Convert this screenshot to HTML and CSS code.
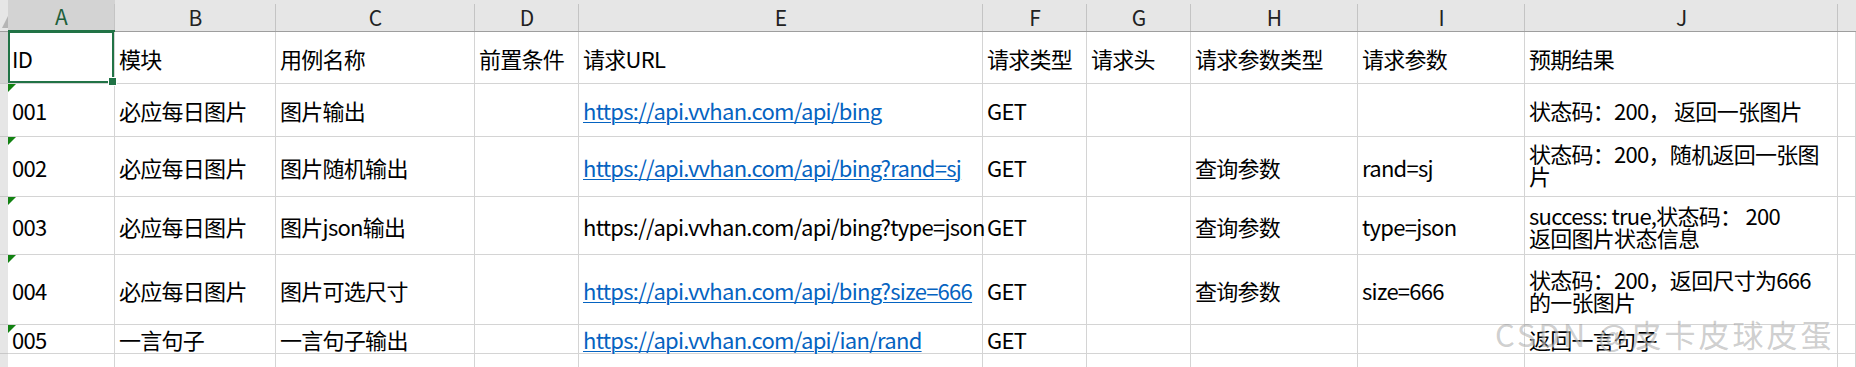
FILE: index.html
```html
<!DOCTYPE html>
<html lang="zh-CN">
<head>
<meta charset="utf-8">
<title>接口测试用例</title>
<link rel="stylesheet" href="styles.css">
</head>
<body>
<div class="sheet">
  <div class="corner"></div>
  <div class="ch sel-col">A</div>
  <div class="ch">B</div>
  <div class="ch">C</div>
  <div class="ch">D</div>
  <div class="ch">E</div>
  <div class="ch">F</div>
  <div class="ch">G</div>
  <div class="ch">H</div>
  <div class="ch">I</div>
  <div class="ch">J</div>
  <div class="ch last"></div>

  <div class="rh sel-row"></div>
  <div class="c sel">ID</div>
  <div class="c">模块</div>
  <div class="c">用例名称</div>
  <div class="c">前置条件</div>
  <div class="c">请求URL</div>
  <div class="c">请求类型</div>
  <div class="c">请求头</div>
  <div class="c">请求参数类型</div>
  <div class="c">请求参数</div>
  <div class="c">预期结果</div>
  <div class="c"></div>

  <div class="rh"></div>
  <div class="c tri">001</div>
  <div class="c">必应每日图片</div>
  <div class="c">图片输出</div>
  <div class="c"></div>
  <div class="c"><a class="link" href="#">https://api.vvhan.com/api/bing</a></div>
  <div class="c">GET</div>
  <div class="c"></div>
  <div class="c"></div>
  <div class="c"></div>
  <div class="c">状态码：200， 返回一张图片</div>
  <div class="c"></div>

  <div class="rh"></div>
  <div class="c tri">002</div>
  <div class="c">必应每日图片</div>
  <div class="c">图片随机输出</div>
  <div class="c"></div>
  <div class="c"><a class="link" href="#">https://api.vvhan.com/api/bing?rand=sj</a></div>
  <div class="c">GET</div>
  <div class="c"></div>
  <div class="c">查询参数</div>
  <div class="c">rand=sj</div>
  <div class="c wrap up">状态码：200，随机返回一张图<br>片</div>
  <div class="c"></div>

  <div class="rh"></div>
  <div class="c tri">003</div>
  <div class="c">必应每日图片</div>
  <div class="c">图片json输出</div>
  <div class="c"></div>
  <div class="c">https://api.vvhan.com/api/bing?type=json</div>
  <div class="c">GET</div>
  <div class="c"></div>
  <div class="c">查询参数</div>
  <div class="c">type=json</div>
  <div class="c wrap">success: true,状态码： 200<br>返回图片状态信息</div>
  <div class="c"></div>

  <div class="rh"></div>
  <div class="c tri">004</div>
  <div class="c">必应每日图片</div>
  <div class="c">图片可选尺寸</div>
  <div class="c"></div>
  <div class="c"><a class="link" href="#">https://api.vvhan.com/api/bing?size=666</a></div>
  <div class="c">GET</div>
  <div class="c"></div>
  <div class="c">查询参数</div>
  <div class="c">size=666</div>
  <div class="c wrap">状态码：200，返回尺寸为666<br>的一张图片</div>
  <div class="c"></div>

  <div class="rh"></div>
  <div class="c tri">005</div>
  <div class="c">一言句子</div>
  <div class="c">一言句子输出</div>
  <div class="c"></div>
  <div class="c"><a class="link" href="#">https://api.vvhan.com/api/ian/rand</a></div>
  <div class="c">GET</div>
  <div class="c"></div>
  <div class="c"></div>
  <div class="c"></div>
  <div class="c">返回一言句子</div>
  <div class="c"></div>

  <div class="rh"></div>
  <div class="c"></div>
  <div class="c"></div>
  <div class="c"></div>
  <div class="c"></div>
  <div class="c"></div>
  <div class="c"></div>
  <div class="c"></div>
  <div class="c"></div>
  <div class="c"></div>
  <div class="c"></div>
  <div class="c"></div>

  <div class="watermark">CSDN @皮卡皮球皮蛋</div>
</div>
</body>
</html>
```

FILE: styles.css
```css
* { box-sizing: border-box; }
html, body {
  margin: 0;
  padding: 0;
  background: #ffffff;
  height: 100%;
  overflow: hidden;
}
.sheet {
  position: relative;
  display: grid;
  grid-template-columns: 8px 107px 161px 199px 104px 404px 104px 104px 167px 167px 313px 1fr;
  grid-template-rows: 32px 52px 53px 60px 58px 70px 29px 40px;
  font-family: "Noto Sans CJK SC", "Noto Sans", sans-serif;
  font-size: 22px;
  letter-spacing: -0.72px;
  color: #000;
}
.corner {
  position: relative;
  background: #e6e6e6;
  border-bottom: 1px solid #9e9e9e;
}
.corner::after {
  content: "";
  position: absolute;
  right: 0;
  bottom: 3px;
  border-left: 6px solid transparent;
  border-bottom: 12px solid #b5b5b5;
}
.ch {
  position: relative;
  background: #e6e6e6;
  border-bottom: 1px solid #9e9e9e;
  display: flex;
  align-items: center;
  justify-content: center;
  padding-top: 3px;
  color: #222;
  font-size: 21px;
  letter-spacing: 0;
  line-height: 1;
}
.ch::after {
  content: "";
  position: absolute;
  right: 0;
  top: 4px;
  bottom: 0;
  width: 1px;
  background: #c4c4c4;
}
.ch.last::after { display: none; }
.ch.sel-col {
  background: #d3d3d3;
  color: #1e5f3b;
  border-bottom: 2px solid #217346;
}
.rh {
  background: #e6e6e6;
  border-bottom: 1px solid #c8c8c8;
}
.rh.sel-row { background: #d3d3d3; }
.c {
  position: relative;
  display: flex;
  align-items: center;
  padding: 0 3px 0 4px;
  border-right: 1px solid #d4d4d4;
  border-bottom: 1px solid #d4d4d4;
  white-space: nowrap;
  overflow: visible;
  line-height: 22px;
}
.c.wrap { line-height: 22px; }
.c.up { padding-bottom: 5px; }
.link {
  color: #0563c1;
  text-decoration: underline;
  text-underline-offset: 2px;
  text-decoration-thickness: 1px;
}
.tri::before {
  content: "";
  position: absolute;
  left: 0;
  top: 0;
  border-top: 8px solid #128212;
  border-right: 8px solid transparent;
}
.sel::after {
  content: "";
  position: absolute;
  left: 0;
  top: -1px;
  right: 0;
  bottom: 0;
  border: 2px solid #217346;
  pointer-events: none;
}
.sel::before {
  content: "";
  position: absolute;
  right: -3px;
  bottom: -3px;
  width: 7px;
  height: 7px;
  background: #217346;
  border: 1px solid #ffffff;
  z-index: 2;
}
.watermark {
  position: absolute;
  left: 1495px;
  top: 316px;
  font-family: "Noto Sans CJK SC", "Noto Sans", sans-serif;
  font-size: 31px;
  letter-spacing: 3px;
  line-height: 36px;
  color: rgba(130, 130, 130, 0.4);
  text-shadow: 1px 1px 0 rgba(255, 255, 255, 0.5);
  white-space: nowrap;
  pointer-events: none;
}
```
